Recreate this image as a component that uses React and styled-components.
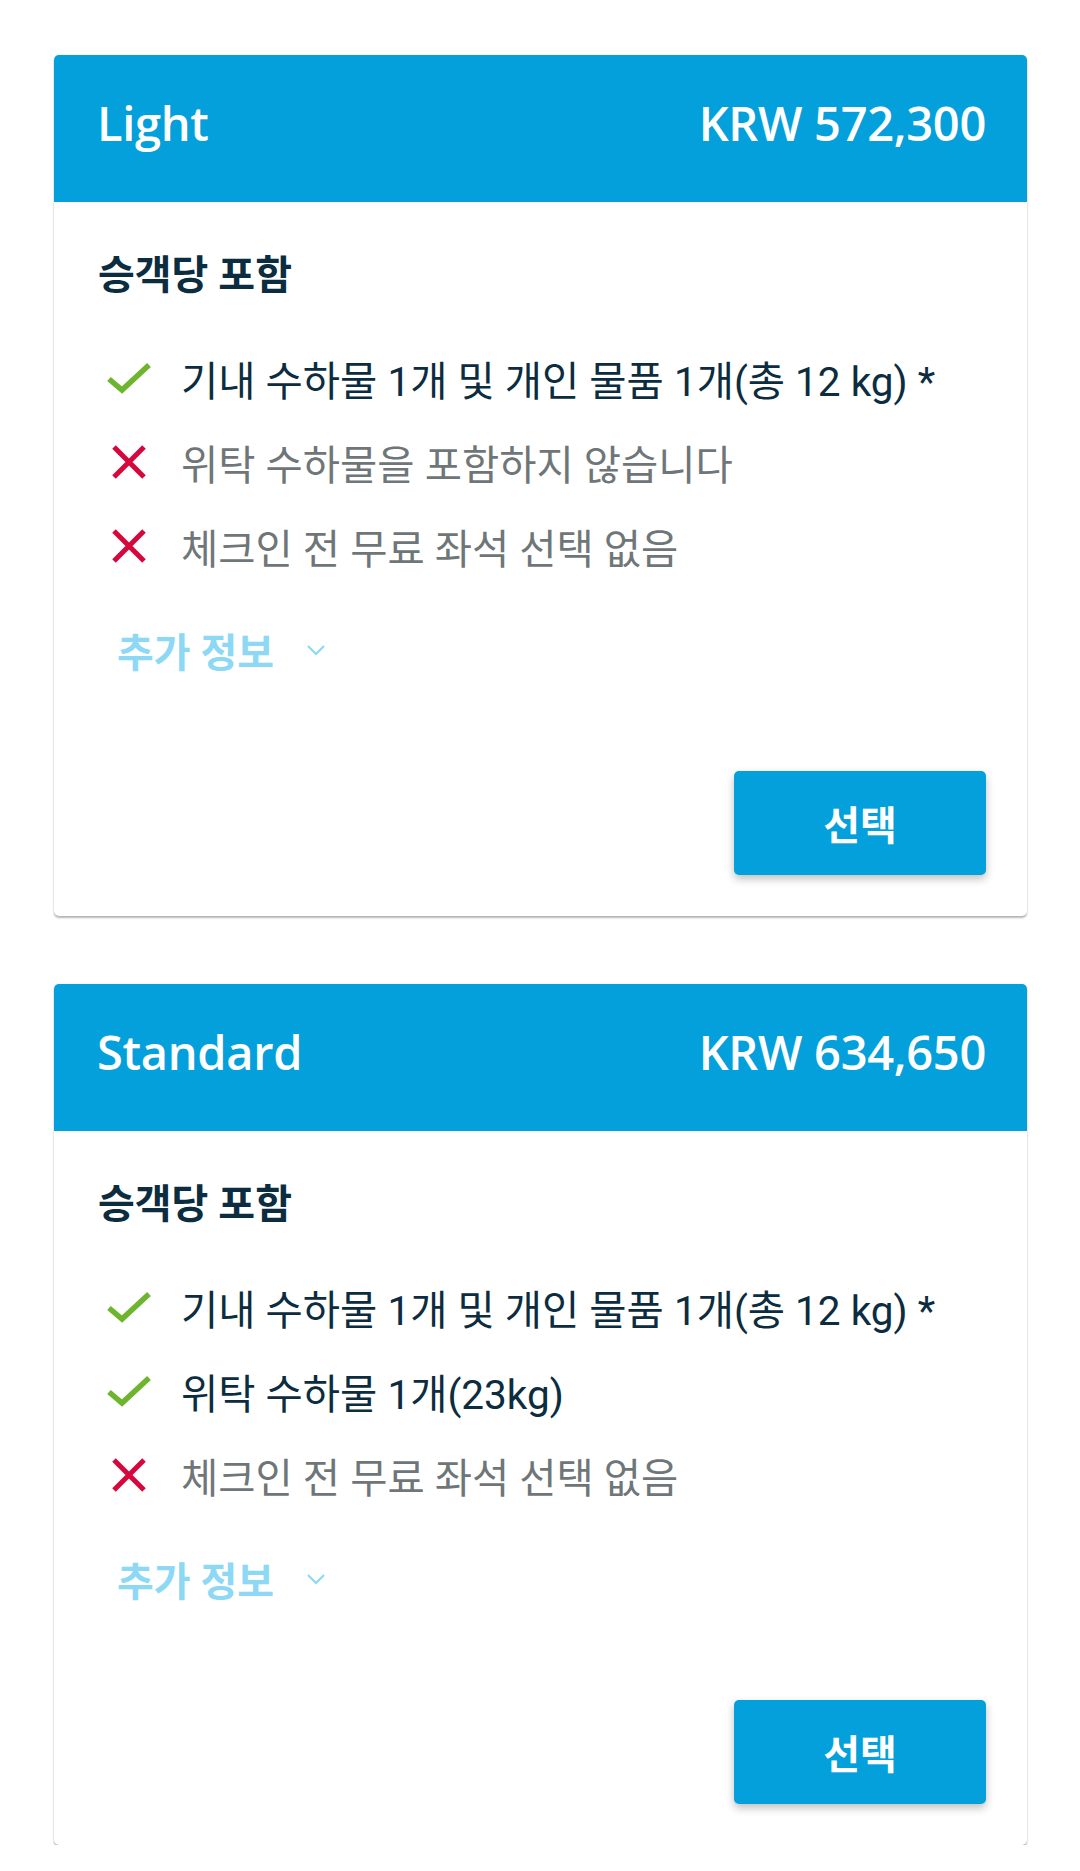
import React from "react";
import styled, { createGlobalStyle } from "styled-components";

const fares = [
  {
    name: "Light",
    price: "KRW 572,300",
    items: [
      { ok: true, text: "기내 수하물 1개 및 개인 물품 1개(총 12 kg) *" },
      { ok: false, text: "위탁 수하물을 포함하지 않습니다" },
      { ok: false, text: "체크인 전 무료 좌석 선택 없음" },
    ],
  },
  {
    name: "Standard",
    price: "KRW 634,650",
    items: [
      { ok: true, text: "기내 수하물 1개 및 개인 물품 1개(총 12 kg) *" },
      { ok: true, text: "위탁 수하물 1개(23kg)" },
      { ok: false, text: "체크인 전 무료 좌석 선택 없음" },
    ],
  },
];

const Check = () => (
  <svg width="46" height="32" viewBox="0 0 46 32">
    <polyline
      points="3,17 16,28 43,3"
      fill="none"
      stroke="#6cb52d"
      strokeWidth="5.5"
      strokeLinejoin="miter"
    />
  </svg>
);

const Cross = () => (
  <svg width="36" height="36" viewBox="0 0 36 36">
    <path d="M3 3 L33 33 M33 3 L3 33" stroke="#d5073c" strokeWidth="5" />
  </svg>
);

const Chevron = () => (
  <svg width="20" height="12" viewBox="0 0 20 12">
    <polyline points="2,2 10,10 18,2" fill="none" stroke="#8dd8f4" strokeWidth="2.2" />
  </svg>
);

const App = () => (
  <>
    <GlobalStyle />
    <Page>
      {fares.map((fare) => (
        <Card key={fare.name}>
          <Header>
            <span>{fare.name}</span>
            <span>{fare.price}</span>
          </Header>
          <Body>
            <Title>승객당 포함</Title>
            <List>
              {fare.items.map((item, i) => (
                <Row key={i}>
                  <IconBox>{item.ok ? <Check /> : <Cross />}</IconBox>
                  <ItemText $ok={item.ok}>{item.text}</ItemText>
                </Row>
              ))}
            </List>
            <MoreInfo>
              추가 정보
              <Chevron />
            </MoreInfo>
            <Footer>
              <SelectButton>선택</SelectButton>
            </Footer>
          </Body>
        </Card>
      ))}
    </Page>
  </>
);

export default App;

const GlobalStyle = createGlobalStyle`
  body {
    margin: 0;
    background: #ffffff;
    font-family: Roboto, "Noto Sans CJK KR", sans-serif;
  }
`;

const Page = styled.div`
  display: flex;
  flex-direction: column;
  gap: 68px;
  padding: 55px 53px 0 54px;
`;

const Card = styled.div`
  background: #fff;
  border-radius: 5px;
  overflow: hidden;
  box-shadow: 0 2px 2px rgba(0, 0, 0, 0.28), 0 0 2px rgba(0, 0, 0, 0.1);
`;

const Header = styled.div`
  height: 147px;
  box-sizing: border-box;
  background: #03a0dc;
  display: flex;
  align-items: center;
  justify-content: space-between;
  padding: 0 41px 12px 43px;
  color: #fff;
  font-family: "Open Sans", "Noto Sans", sans-serif;
  font-size: 47px;
  font-weight: 600;
  letter-spacing: -0.3px;
`;

const Body = styled.div`
  padding: 49px 41px 41px 44px;
`;

const Title = styled.div`
  font-size: 40px;
  font-weight: 700;
  line-height: 50px;
  color: #0c2c40;
`;

const List = styled.div`
  margin-top: 35px;
  display: flex;
  flex-direction: column;
`;

const Row = styled.div`
  height: 84px;
  display: flex;
  align-items: center;
`;

const IconBox = styled.div`
  width: 48px;
  margin-left: 7px;
  margin-right: 28px;
  display: flex;
  justify-content: center;
  align-items: center;
`;

const ItemText = styled.span`
  font-size: 40.5px;
  color: ${(p) => (p.$ok ? "#0c2c40" : "#6f7678")};
  white-space: nowrap;
`;

const MoreInfo = styled.div`
  margin-top: 37px;
  padding-left: 19px;
  height: 50px;
  display: flex;
  align-items: center;
  gap: 32px;
  font-size: 40px;
  font-weight: 700;
  color: #8dd8f4;
`;

const Footer = styled.div`
  margin-top: 96px;
  display: flex;
  justify-content: flex-end;
`;

const SelectButton = styled.button`
  width: 252px;
  height: 104px;
  border: none;
  border-radius: 5px;
  background: #03a0dc;
  color: #fff;
  font-family: Roboto, "Noto Sans CJK KR", sans-serif;
  font-size: 40px;
  font-weight: 700;
  box-shadow: 0 4px 8px rgba(0, 0, 0, 0.25);
`;
